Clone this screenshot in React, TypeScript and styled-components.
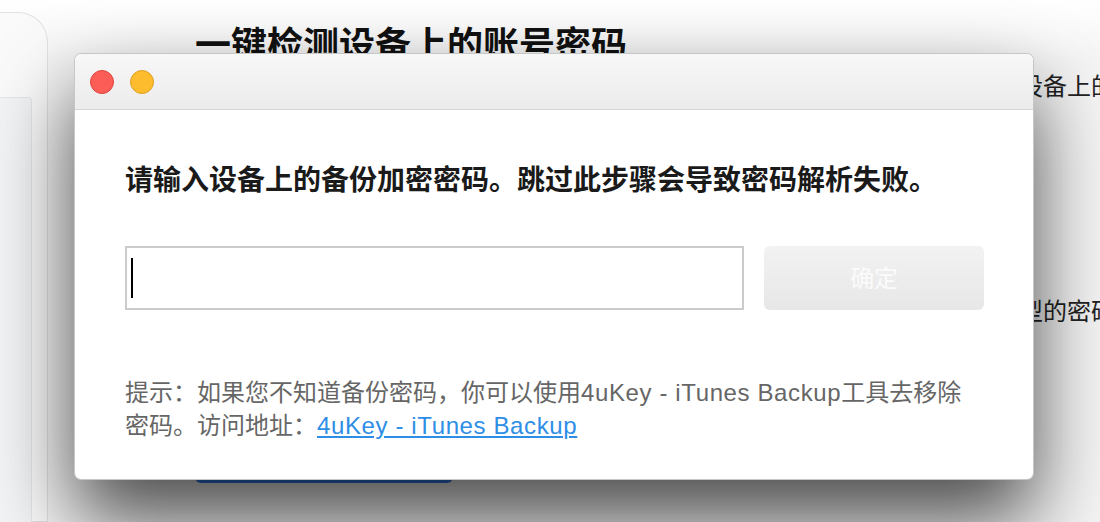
import React from 'react'
import styled, { createGlobalStyle } from 'styled-components'

const GlobalStyle = createGlobalStyle`
  html, body {
    margin: 0;
    padding: 0;
    width: 1100px;
    height: 522px;
    overflow: hidden;
    font-family: "Liberation Sans", "Noto Sans CJK SC", sans-serif;
  }
`

const Page = styled.div`
  position: relative;
  width: 1100px;
  height: 522px;
  display: flex;
  background: linear-gradient(#ffffff, #f5f5f5 60px, #f5f5f5);
  overflow: hidden;
`

const Sidebar = styled.div`
  width: 48px;
  flex-shrink: 0;
  margin-top: 12px;
  box-sizing: border-box;
  background: #fafafa;
  border: 1px solid #e2e2e2;
  border-left: none;
  border-radius: 0 30px 0 0;
  padding-top: 84px;
  padding-right: 15px;
`

const SidebarPanel = styled.div`
  height: 100%;
  background: #f3f4f6;
  border: 1px solid #e6e6e6;
  border-left: none;
  border-radius: 0 4px 0 0;
`

const Main = styled.div`
  flex: 1;
  min-width: 0;
  overflow: hidden;
  display: flex;
  flex-direction: column;
  padding: 24px 0 0 147px;
  white-space: nowrap;
`

const Title = styled.h1`
  margin: 0;
  font-size: 36px;
  line-height: 43px;
  font-weight: 700;
  color: #111;
`

const Desc = styled.p<{ gap: number }>`
  margin: ${p => p.gap}px 0 0;
  font-size: 24px;
  line-height: 32px;
  color: #222;
`

const StartButton = styled.div`
  margin-top: 107px;
  width: 258px;
  height: 48px;
  flex-shrink: 0;
  border-radius: 6px;
  background: #2f7be6;
`

const Dialog = styled.div`
  position: absolute;
  left: 74px;
  top: 53px;
  width: 960px;
  height: 427px;
  box-sizing: border-box;
  display: flex;
  flex-direction: column;
  background: #fff;
  border: 1px solid rgba(0, 0, 0, 0.22);
  border-radius: 7px;
  box-shadow: 0 40px 80px rgba(0, 0, 0, 0.7);
  overflow: hidden;
`

const TitleBar = styled.div`
  height: 56px;
  flex-shrink: 0;
  box-sizing: border-box;
  display: flex;
  align-items: center;
  gap: 16px;
  padding-left: 15px;
  background: linear-gradient(#f7f7f7, #ececec);
  border-bottom: 1px solid #d6d6d6;
`

const Light = styled.span<{ color: string; edge: string }>`
  width: 24px;
  height: 24px;
  border-radius: 50%;
  box-sizing: border-box;
  background: ${p => p.color};
  border: 1px solid ${p => p.edge};
`

const Body = styled.div`
  flex: 1;
  display: flex;
  flex-direction: column;
  padding: 53px 49px 0 50px;
`

const Prompt = styled.div`
  font-size: 28px;
  line-height: 36px;
  font-weight: 700;
  color: #1a1a1a;
`

const InputRow = styled.div`
  display: flex;
  gap: 20px;
  margin-top: 47px;
`

const PasswordBox = styled.div`
  width: 620px;
  height: 64px;
  box-sizing: border-box;
  border: 2px solid #cbcbcb;
  padding: 10px 4px;
  display: flex;
  align-items: center;
`

const Caret = styled.span`
  width: 2px;
  height: 40px;
  background: #000;
`

const ConfirmButton = styled.div`
  width: 220px;
  height: 64px;
  border-radius: 6px;
  background: linear-gradient(#f2f2f2, #e7e7e7);
  color: #fbfbfb;
  font-size: 24px;
  display: flex;
  align-items: center;
  justify-content: center;
  padding-bottom: 3px;
  box-sizing: border-box;
`

const Hint = styled.div`
  margin-top: 66px;
  font-size: 24px;
  line-height: 33px;
  color: #666;
`

// latin runs in the reference font set a little wider than Arial
const Latin = styled.span`
  letter-spacing: 0.62px;
`

const HintLink = styled.a`
  color: #2e8ee6;
  text-decoration: underline;
  letter-spacing: 0.62px;
`

export default function App() {
  return (
    <>
      <GlobalStyle />
      <Page>
        <Sidebar>
          <SidebarPanel />
        </Sidebar>
        <Main>
          <Title>一键检测设备上的账号密码</Title>
          <Desc gap={4}>无需越狱，只需点击下方的开始扫描按钮，即可快速查找并找回Wi-Fi等保存在设备上的所有账号密码</Desc>
          <Desc gap={193}>支持查看Wi-Fi密码、网站与应用登录账号、邮箱账户、信用卡信息以及多种类型的密码</Desc>
          <StartButton />
        </Main>
        <Dialog>
          <TitleBar>
            <Light color="#fc5e57" edge="#e0443e" />
            <Light color="#fdbb2e" edge="#dea123" />
          </TitleBar>
          <Body>
            <Prompt>请输入设备上的备份加密密码。跳过此步骤会导致密码解析失败。</Prompt>
            <InputRow>
              <PasswordBox>
                <Caret />
              </PasswordBox>
              <ConfirmButton>确定</ConfirmButton>
            </InputRow>
            <Hint>
              提示：如果您不知道备份密码，你可以使用<Latin>4uKey - iTunes Backup</Latin>工具去移除
              <br />
              密码。访问地址：<HintLink href="#">4uKey - iTunes Backup</HintLink>
            </Hint>
          </Body>
        </Dialog>
      </Page>
    </>
  )
}
